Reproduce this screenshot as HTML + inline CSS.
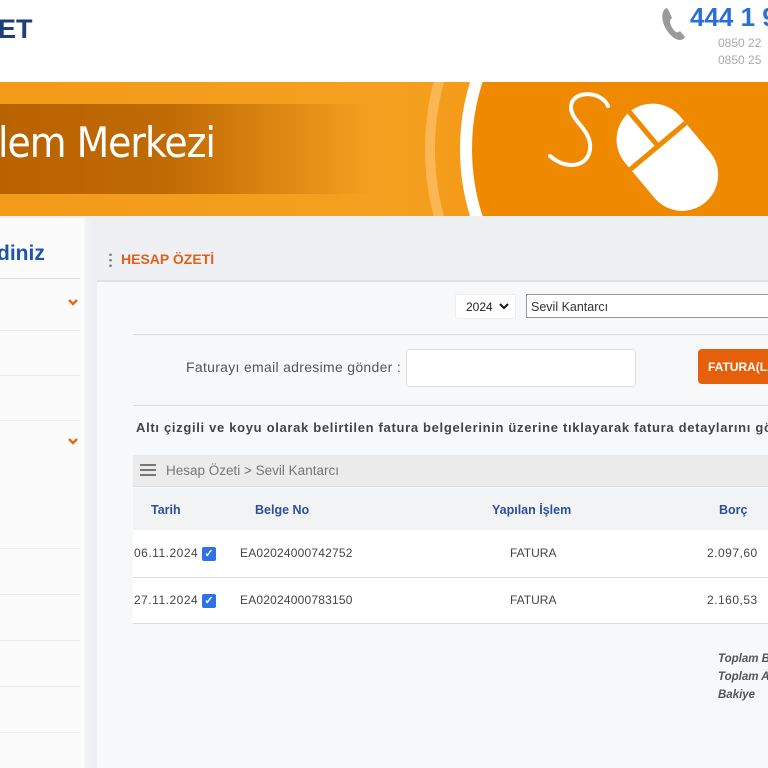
<!DOCTYPE html>
<html><head><meta charset="utf-8"><style>
*{margin:0;padding:0;box-sizing:border-box}
body{width:768px;height:768px;overflow:hidden;background:#eef0f3;font-family:"Liberation Sans",sans-serif;position:relative}
.a{position:absolute;white-space:nowrap}
.hl{position:absolute;height:1px;background:#dcdcdc}
.t{font:12px "Liberation Sans",sans-serif;color:#444;letter-spacing:.5px}
.h{font:bold 12.5px "Liberation Sans",sans-serif;color:#2c4f9e}
</style></head><body>
<div class="a" style="left:0;top:0;width:768px;height:82px;background:#fff"></div>
<div class="a" style="left:-2px;top:14px;font:bold 27px 'Liberation Sans',sans-serif;color:#1d3f7a">ET</div>
<svg class="a" style="left:660px;top:6px" width="32" height="36" viewBox="0 0 32 36"><path d="M6 2c-4 3-5 9-2 17 4 9 10 14 15 15 3 0 5-1 6-3l-5-6c-1 1-3 2-4 1-3-2-6-7-6-11 0-1 1-2 2-3L8 3z" fill="#9a9a9a"/></svg>
<div class="a" style="left:690px;top:2px;font:bold 26px 'Liberation Sans',sans-serif;color:#2b6fd6">444 1 9</div>
<div class="a" style="left:718px;top:36px;font:12px 'Liberation Sans',sans-serif;color:#aaa">0850 22</div>
<div class="a" style="left:718px;top:53px;font:12px 'Liberation Sans',sans-serif;color:#aaa">0850 25</div>
<div class="a" style="left:0;top:82px;width:768px;height:134px;overflow:hidden;background:linear-gradient(90deg,#f39a18,#f5a020 50%,#ef8a00)">
 <div class="a" style="left:0;top:22px;width:370px;height:90px;background:linear-gradient(90deg,#b96200,#c06a05 45%,rgba(240,150,20,0))"></div>
 <div class="a" style="left:-2px;top:36px;font:42px 'DejaVu Sans Condensed','Liberation Sans Narrow',sans-serif;color:#fff;letter-spacing:-1px">lem Merkezi</div>
 <div class="a" style="left:425px;top:-198px;width:530px;height:530px;border-radius:50%;border:10px solid rgba(255,200,120,.6)"></div>
 <div class="a" style="left:460px;top:-163px;width:460px;height:460px;border-radius:50%;border:12px solid #fff;background:#ef8a00"></div>
 <svg class="a" style="left:540px;top:6px" width="190" height="125" viewBox="0 0 190 125"><path d="M10 68c18 16 42 10 40-12-2-18-24-26-18-42 6-12 30-10 36 4" fill="none" stroke="#fff" stroke-width="4" stroke-linecap="round"/><g transform="rotate(-40 128 70)"><rect x="92" y="10" width="72" height="118" rx="36" fill="#fff"/><rect x="92" y="52" width="72" height="5" fill="#ef8a00"/><rect x="125.5" y="5" width="5" height="50" fill="#ef8a00"/></g></svg>
</div>
<div class="a" style="left:0;top:218px;width:84px;height:550px;background:#fbfbfc"></div>
<div class="a" style="left:84px;top:218px;width:12px;height:550px;background:linear-gradient(90deg,#f3f4f6,#eceef1)"></div>
<div class="a" style="left:-3px;top:242px;font:bold 21px 'Liberation Sans',sans-serif;color:#1d56a8">diniz</div>
<div class="hl" style="left:0;top:278px;width:80px;background:#d8dbe0"></div>
<svg class="a" style="left:67px;top:298px" width="12" height="9"><path d="M2 2l4 4 4-4" stroke="#e26a1a" stroke-width="2.5" fill="none"/></svg>
<svg class="a" style="left:67px;top:437px" width="12" height="9"><path d="M2 2l4 4 4-4" stroke="#e26a1a" stroke-width="2.5" fill="none"/></svg>
<div class="hl" style="left:0;top:330px;width:80px;background:#ececec"></div>
<div class="hl" style="left:0;top:375px;width:80px;background:#ececec"></div>
<div class="hl" style="left:0;top:420px;width:80px;background:#ececec"></div>
<div class="hl" style="left:0;top:548px;width:80px;background:#ececec"></div>
<div class="hl" style="left:0;top:594px;width:80px;background:#ececec"></div>
<div class="hl" style="left:0;top:640px;width:80px;background:#ececec"></div>
<div class="hl" style="left:0;top:686px;width:80px;background:#ececec"></div>
<div class="hl" style="left:0;top:732px;width:80px;background:#ececec"></div>
<div class="a" style="left:97px;top:225px;width:671px;height:543px;background:#f7f8fa"></div>
<div class="a" style="left:97px;top:225px;width:671px;height:57px;background:#eef0f3;border-bottom:2px solid #dfe1e5"></div>
<div class="a" style="left:109px;top:252px;width:3px;height:16px;background:radial-gradient(circle,#888 1.3px,transparent 1.5px) 0 0/3px 5.5px"></div>
<div class="a" style="left:121px;top:251px;font:bold 14px 'Liberation Sans',sans-serif;color:#e0621a">HESAP ÖZETİ</div>
<div class="a" style="left:455px;top:294px;width:61px;height:25px;background:#fff;border:1px solid #eee;border-radius:2px;font:12px 'Liberation Sans',sans-serif;color:#222;padding:5px 0 0 10px">2024</div>
<svg class="a" style="left:498px;top:302px" width="12" height="9"><path d="M2 2l4 4 4-4" stroke="#222" stroke-width="2.2" fill="none"/></svg>
<div class="a" style="left:526px;top:294px;width:250px;height:24px;background:#fff;border:1px solid #999;font:12.5px 'Liberation Sans',sans-serif;color:#333;padding:5px 0 0 4px">Sevil Kantarcı</div>
<div class="hl" style="left:133px;top:334px;width:640px"></div>
<div class="a" style="left:186px;top:359px;font:14px 'Liberation Sans',sans-serif;color:#555;letter-spacing:.3px">Faturayı email adresime gönder :</div>
<div class="a" style="left:406px;top:349px;width:230px;height:38px;background:#fff;border:1px solid #ddd;border-radius:3px"></div>
<div class="a" style="left:698px;top:349px;width:90px;height:35px;background:#e65f0a;border-radius:4px;font:bold 12px 'Liberation Sans Narrow','Liberation Sans',sans-serif;color:#fff;padding:11px 0 0 10px">FATURA(LAR)</div>
<div class="hl" style="left:133px;top:405px;width:640px"></div>
<div class="a" style="left:136px;top:420px;font:bold 13px 'Liberation Sans',sans-serif;color:#444;letter-spacing:.68px">Altı çizgili ve koyu olarak belirtilen fatura belgelerinin üzerine tıklayarak fatura detaylarını görebilirsiniz</div>
<div class="a" style="left:133px;top:455px;width:640px;height:32px;background:#ebebeb;border-bottom:1px solid #ddd"></div>
<div class="a" style="left:140px;top:464px;width:16px;height:2px;background:#777;box-shadow:0 5px #777,0 10px #777"></div>
<div class="a" style="left:166px;top:463px;font:13.5px 'Liberation Sans',sans-serif;color:#777">Hesap Özeti &gt; Sevil Kantarcı</div>
<div class="a" style="left:133px;top:488px;width:640px;height:42px;background:#f2f3f5"></div>
<div class="a h" style="left:151px;top:503px">Tarih</div>
<div class="a h" style="left:255px;top:503px">Belge No</div>
<div class="a h" style="left:492px;top:503px">Yapılan İşlem</div>
<div class="a h" style="left:719px;top:503px">Borç</div>
<div class="a" style="left:133px;top:530px;width:640px;height:94px;background:#fff"></div>
<div class="a t" style="left:134px;top:546px">06.11.2024</div>
<div class="a" style="left:202px;top:547px;width:14px;height:14px;background:#2f72e6;border-radius:2px;color:#fff;font:bold 11px sans-serif;text-align:center;line-height:14px">✓</div>
<div class="a t" style="left:240px;top:546px;letter-spacing:.2px">EA02024000742752</div>
<div class="a t" style="left:510px;top:546px;letter-spacing:0">FATURA</div>
<div class="a t" style="left:707px;top:546px">2.097,60</div>
<div class="hl" style="left:133px;top:577px;width:640px"></div>
<div class="a t" style="left:134px;top:593px">27.11.2024</div>
<div class="a" style="left:202px;top:594px;width:14px;height:14px;background:#2f72e6;border-radius:2px;color:#fff;font:bold 11px sans-serif;text-align:center;line-height:14px">✓</div>
<div class="a t" style="left:240px;top:593px;letter-spacing:.2px">EA02024000783150</div>
<div class="a t" style="left:510px;top:593px;letter-spacing:0">FATURA</div>
<div class="a t" style="left:707px;top:593px">2.160,53</div>
<div class="hl" style="left:133px;top:623px;width:640px"></div>
<div class="a" style="left:718px;top:650px;font:italic bold 11.5px 'Liberation Sans',sans-serif;color:#555;line-height:18px">Toplam Borç<br>Toplam Alacak<br>Bakiye</div>
</body></html>
